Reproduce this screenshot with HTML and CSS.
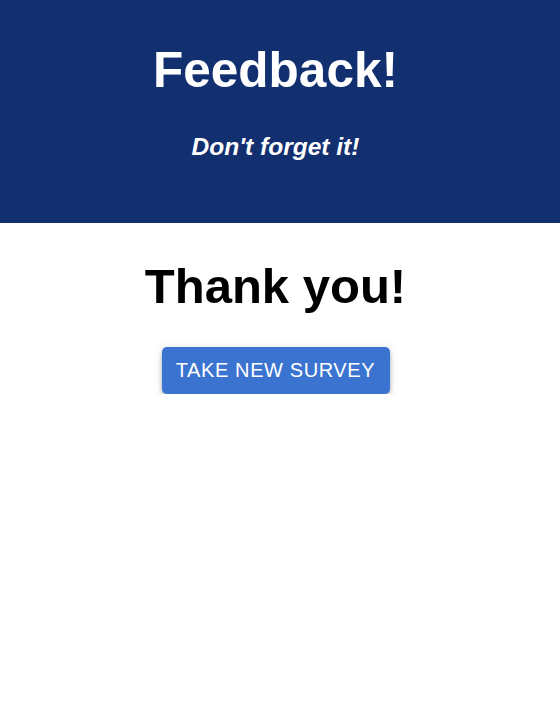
FILE: index.html
```html
<!DOCTYPE html>
<html>
<head>
<meta charset="utf-8">
<link rel="stylesheet" href="styles.css">
</head>
<body>
<header class="hero">
  <h1 class="hero-title">Feedback!</h1>
  <p class="hero-sub">Don't forget it!</p>
</header>
<main class="content">
  <h2 class="thanks">Thank you!</h2>
  <button class="btn">Take new survey</button>
</main>
</body>
</html>
```
FILE: styles.css
```css
* { box-sizing: border-box; }
html, body { margin: 0; padding: 0; background: #fff; }
body { font-family: "Liberation Sans", Arial, sans-serif; }
.hero {
  background: #122f6f;
  color: #fff;
  height: 223px;
  display: flex;
  flex-direction: column;
  align-items: center;
  padding: 44px 9px 0 0;
}
.hero-title {
  margin: 0;
  font-size: 49.5px;
  font-weight: 700;
  line-height: 52px;
}
.hero-sub {
  margin: 37px 0 0;
  font-size: 24.5px;
  font-weight: 700;
  font-style: italic;
  line-height: 28px;
}
.content {
  display: flex;
  flex-direction: column;
  align-items: center;
  padding: 35px 9px 0 0;
}
.thanks {
  margin: 0;
  font-size: 49px;
  font-weight: 700;
  line-height: 56px;
  color: #000;
}
.btn {
  margin-top: 33px;
  width: 228px;
  height: 47px;
  border: none;
  border-radius: 5px;
  background: #3a74d0;
  color: #fff;
  font-family: "Liberation Sans", Arial, sans-serif;
  font-size: 20px;
  text-transform: uppercase;
  letter-spacing: 0.6px;
  box-shadow: 0 2px 4px -1px rgba(0,0,0,0.2), 0 4px 5px 0 rgba(0,0,0,0.14), 0 1px 10px 0 rgba(0,0,0,0.12);
  padding: 0;
}
```
